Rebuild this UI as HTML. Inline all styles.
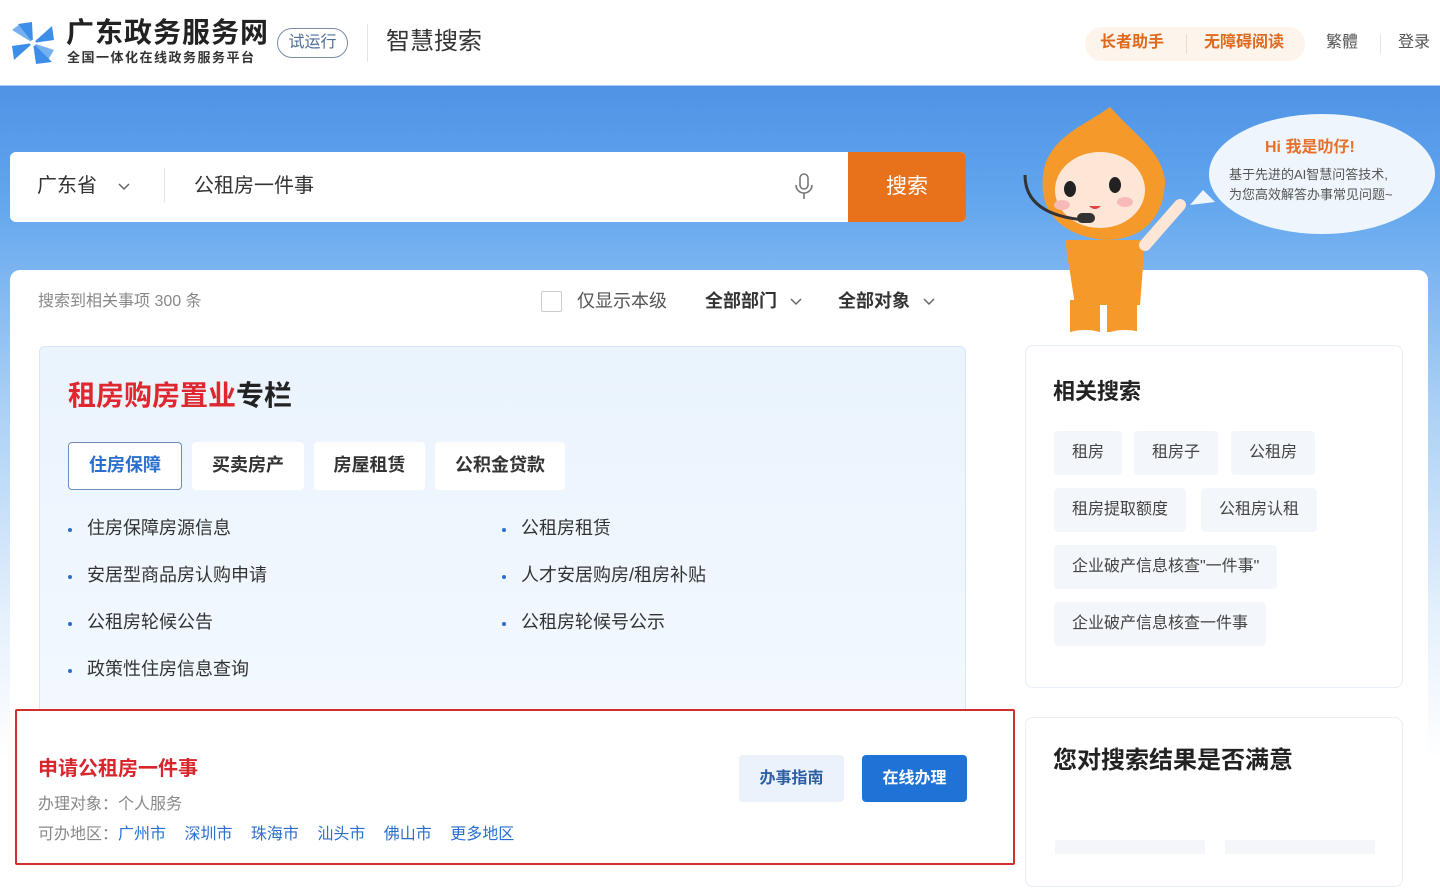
<!DOCTYPE html>
<html><head><meta charset="utf-8"><style>
*{margin:0;padding:0;box-sizing:border-box}
body{width:1440px;height:872px;overflow:hidden;font-family:"Liberation Sans","Noto Sans CJK SC",sans-serif;background:linear-gradient(180deg,#fff 0,#fff 85px,#4f93e6 86px,#62a6ee 200px,#a9cff5 400px,#e6f1fc 620px,#fff 760px);position:relative;color:#333;line-height:1.2}
.a{position:absolute}
.hdr{left:0;top:0;width:1440px;height:85px;background:#fff}
.card{left:10px;top:270px;width:1418px;height:620px;background:#fff;border-radius:10px}
.search{left:10px;top:152px;width:956px;height:70px;background:#fff;border-radius:6px;overflow:hidden}
.btn{left:848px;top:152px;width:118px;height:70px;background:#e8721c;color:#fff;font-size:21px;display:flex;align-items:center;justify-content:center;border-radius:0 6px 6px 0}
.feat{left:39px;top:346px;width:927px;height:368px;background:linear-gradient(180deg,#eaf4fd,#f2f8fe);border:1px solid #d5e6f6;border-radius:6px}
.tab{top:442px;height:48px;background:#fff;border-radius:4px;font-size:18px;font-weight:bold;color:#333;display:flex;align-items:center;justify-content:center}
.li{font-size:18px;color:#333}
.li:before{content:"";position:absolute;left:-19px;top:10px;width:4px;height:4px;border-radius:50%;background:#2a6fce}
.rc{left:1025px;width:378px;background:#fff;border:1px solid #e8eef5;border-radius:8px}
.tag{height:44px;background:#f3f6fa;border-radius:4px;font-size:16px;color:#444;display:flex;align-items:center;padding:0 18px;position:absolute}
</style></head><body>
<div class="a hdr"></div>
<svg class="a" style="left:10px;top:20px" width="46" height="46" viewBox="0 0 46 46"><g fill="#3d8ee8"><path d="M23 23 L8 4 L22 2Z"/><path d="M23 23 L42 6 L44 20Z"/><path d="M23 23 L42 42 L26 44Z"/><path d="M23 23 L4 40 L2 26Z"/><path d="M23 23 L2 10 L10 4Z" opacity=".7"/><path d="M23 23 L44 30 L38 40Z" opacity=".7"/></g><circle cx="23" cy="23" r="3" fill="#fff"/></svg>
<div class="a" style="left:66px;top:16px;font-size:28px;font-weight:bold;color:#222;letter-spacing:1px">广东政务服务网</div>
<div class="a" style="left:67px;top:50px;font-size:13px;font-weight:bold;color:#333;letter-spacing:1.5px">全国一体化在线政务服务平台</div>
<div class="a" style="left:277px;top:28px;width:71px;height:30px;border:1.5px solid #7a8ea8;border-radius:15px;font-size:16px;color:#4f6d94;text-align:center;line-height:27px">试运行</div>
<div class="a" style="left:367px;top:24px;width:1px;height:38px;background:#e5e5e5"></div>
<div class="a" style="left:386px;top:28px;font-size:24px;color:#333">智慧搜索</div>
<div class="a" style="left:1085px;top:27px;width:220px;height:34px;background:#fdf4ec;border-radius:17px"></div>
<div class="a" style="left:1100px;top:33px;font-size:16px;font-weight:bold;color:#e06a1f">长者助手</div>
<div class="a" style="left:1186px;top:34px;width:1px;height:20px;background:#eedccc"></div>
<div class="a" style="left:1204px;top:33px;font-size:16px;font-weight:bold;color:#e06a1f">无障碍阅读</div>
<div class="a" style="left:1326px;top:33px;font-size:16px;color:#555">繁體</div>
<div class="a" style="left:1380px;top:34px;width:1px;height:20px;background:#e5e5e5"></div>
<div class="a" style="left:1398px;top:33px;font-size:16px;color:#555">登录</div>

<div class="a card"></div>
<div class="a search"></div>
<div class="a" style="left:37px;top:174px;font-size:20px;color:#333">广东省</div>
<svg class="a" style="left:117px;top:182px" width="14" height="10"><path d="M2 2l5 5 5-5" stroke="#666" stroke-width="1.5" fill="none"/></svg>
<div class="a" style="left:164px;top:168px;width:1px;height:34px;background:#e3e3e3"></div>
<div class="a" style="left:194px;top:174px;font-size:20px;color:#333">公租房一件事</div>
<svg class="a" style="left:793px;top:172px" width="22" height="30" viewBox="0 0 22 30"><rect x="7" y="2" width="8" height="15" rx="4" fill="none" stroke="#777" stroke-width="1.6"/><path d="M3 13a8 8 0 0 0 16 0M11 21v6" stroke="#777" stroke-width="1.6" fill="none"/></svg>
<div class="a btn">搜索</div>

<div class="a" style="left:38px;top:292px;font-size:16px;color:#888">搜索到相关事项 300 条</div>
<div class="a" style="left:541px;top:291px;width:21px;height:21px;border:1px solid #ccc;border-radius:2px"></div>
<div class="a" style="left:577px;top:291px;font-size:18px;color:#555">仅显示本级</div>
<div class="a" style="left:705px;top:291px;font-size:18px;font-weight:bold;color:#333">全部部门</div>
<svg class="a" style="left:789px;top:297px" width="14" height="10"><path d="M2 2l5 5 5-5" stroke="#666" stroke-width="1.5" fill="none"/></svg>
<div class="a" style="left:838px;top:291px;font-size:18px;font-weight:bold;color:#333">全部对象</div>
<svg class="a" style="left:922px;top:297px" width="14" height="10"><path d="M2 2l5 5 5-5" stroke="#666" stroke-width="1.5" fill="none"/></svg>

<div class="a feat"></div>
<div class="a" style="left:68px;top:379px;font-size:28px;font-weight:bold;color:#222"><span style="color:#e0262f">租房购房置业</span>专栏</div>
<div class="a tab" style="left:68px;width:114px;border:1.5px solid #6b8fb8;color:#2a6fce">住房保障</div>
<div class="a tab" style="left:192px;width:112px">买卖房产</div>
<div class="a tab" style="left:314px;width:111px">房屋租赁</div>
<div class="a tab" style="left:435px;width:130px">公积金贷款</div>
<div class="a li" style="left:87px;top:518px">住房保障房源信息</div>
<div class="a li" style="left:87px;top:565px">安居型商品房认购申请</div>
<div class="a li" style="left:87px;top:612px">公租房轮候公告</div>
<div class="a li" style="left:87px;top:659px">政策性住房信息查询</div>
<div class="a li" style="left:521px;top:518px">公租房租赁</div>
<div class="a li" style="left:521px;top:565px">人才安居购房/租房补贴</div>
<div class="a li" style="left:521px;top:612px">公租房轮候号公示</div>

<div class="a" style="left:15px;top:709px;width:1000px;height:156px;border:2.5px solid #d22e2e;border-radius:2px;background:#fff"></div>
<div class="a" style="left:38px;top:757px;font-size:20px;font-weight:bold;color:#d8262c">申请公租房一件事</div>
<div class="a" style="left:38px;top:795px;font-size:16px;color:#888">办理对象：个人服务</div>
<div class="a" style="left:38px;top:825px;font-size:16px;color:#888">可办地区：<span style="color:#2a6fce;word-spacing:14px">广州市 深圳市 珠海市 汕头市 佛山市 更多地区</span></div>
<div class="a" style="left:739px;top:755px;width:105px;height:47px;background:#ebf2fc;border-radius:4px;font-size:16px;font-weight:bold;color:#2d5fa3;text-align:center;line-height:47px">办事指南</div>
<div class="a" style="left:862px;top:755px;width:105px;height:47px;background:#1f72d6;border-radius:4px;font-size:16px;font-weight:bold;color:#fff;text-align:center;line-height:47px">在线办理</div>

<div class="a rc" style="top:345px;height:343px"></div>
<div class="a" style="left:1053px;top:379px;font-size:22px;font-weight:bold;color:#222">相关搜索</div>
<div class="tag" style="left:1054px;top:431px">租房</div>
<div class="tag" style="left:1134px;top:431px">租房子</div>
<div class="tag" style="left:1231px;top:431px">公租房</div>
<div class="tag" style="left:1054px;top:488px">租房提取额度</div>
<div class="tag" style="left:1201px;top:488px">公租房认租</div>
<div class="tag" style="left:1054px;top:545px">企业破产信息核查"一件事"</div>
<div class="tag" style="left:1054px;top:602px">企业破产信息核查一件事</div>
<div class="a rc" style="top:717px;height:170px"></div>
<div class="a" style="left:1053px;top:747px;font-size:24px;font-weight:bold;color:#222">您对搜索结果是否满意</div>
<div class="a" style="left:1055px;top:840px;width:150px;height:14px;background:#f4f6f9"></div>
<div class="a" style="left:1225px;top:840px;width:150px;height:14px;background:#f4f6f9"></div>

<svg class="a" style="left:1015px;top:105px" width="185" height="235" viewBox="0 0 185 235">
<path d="M95 2 C70 20 40 30 30 60 C20 100 40 130 90 135 C130 135 150 110 150 75 C145 45 125 35 95 2Z" fill="#f59a2a"/>
<ellipse cx="85" cy="85" rx="45" ry="38" fill="#fde6d6"/>
<ellipse cx="55" cy="84" rx="6" ry="8" fill="#222"/><ellipse cx="100" cy="80" rx="6" ry="8" fill="#222"/>
<ellipse cx="47" cy="100" rx="8" ry="5" fill="#f8b9b9"/><ellipse cx="110" cy="97" rx="8" ry="5" fill="#f8b9b9"/>
<path d="M74 101 q6 6 12 0z" fill="#d44"/>
<path d="M10 70 q0 40 60 45" stroke="#333" stroke-width="3" fill="none"/><rect x="62" y="108" width="18" height="10" rx="5" fill="#333"/>
<path d="M50 135 L130 135 L125 200 L60 200Z" fill="#f59a2a"/>
<rect x="55" y="195" width="30" height="32" fill="#f59a2a"/><rect x="92" y="195" width="30" height="32" fill="#f59a2a"/>
<path d="M130 140 L165 100" stroke="#fde6d6" stroke-width="12" stroke-linecap="round"/>
<ellipse cx="70" cy="230" rx="18" ry="5" fill="#fff"/><ellipse cx="110" cy="230" rx="18" ry="5" fill="#fff"/>
</svg>
<svg class="a" style="left:1185px;top:110px" width="250" height="130"><path d="M18 80 L5 95 L30 92Z" fill="#eef5fc"/><ellipse cx="137" cy="64" rx="113" ry="60" fill="#eef5fc"/></svg>
<div class="a" style="left:1265px;top:138px;font-size:16px;font-weight:bold;color:#e8702a">Hi 我是叻仔!</div>
<div class="a" style="left:1229px;top:165px;font-size:13px;color:#555;line-height:20px">基于先进的AI智慧问答技术,<br>为您高效解答办事常见问题~</div>
</body></html>
